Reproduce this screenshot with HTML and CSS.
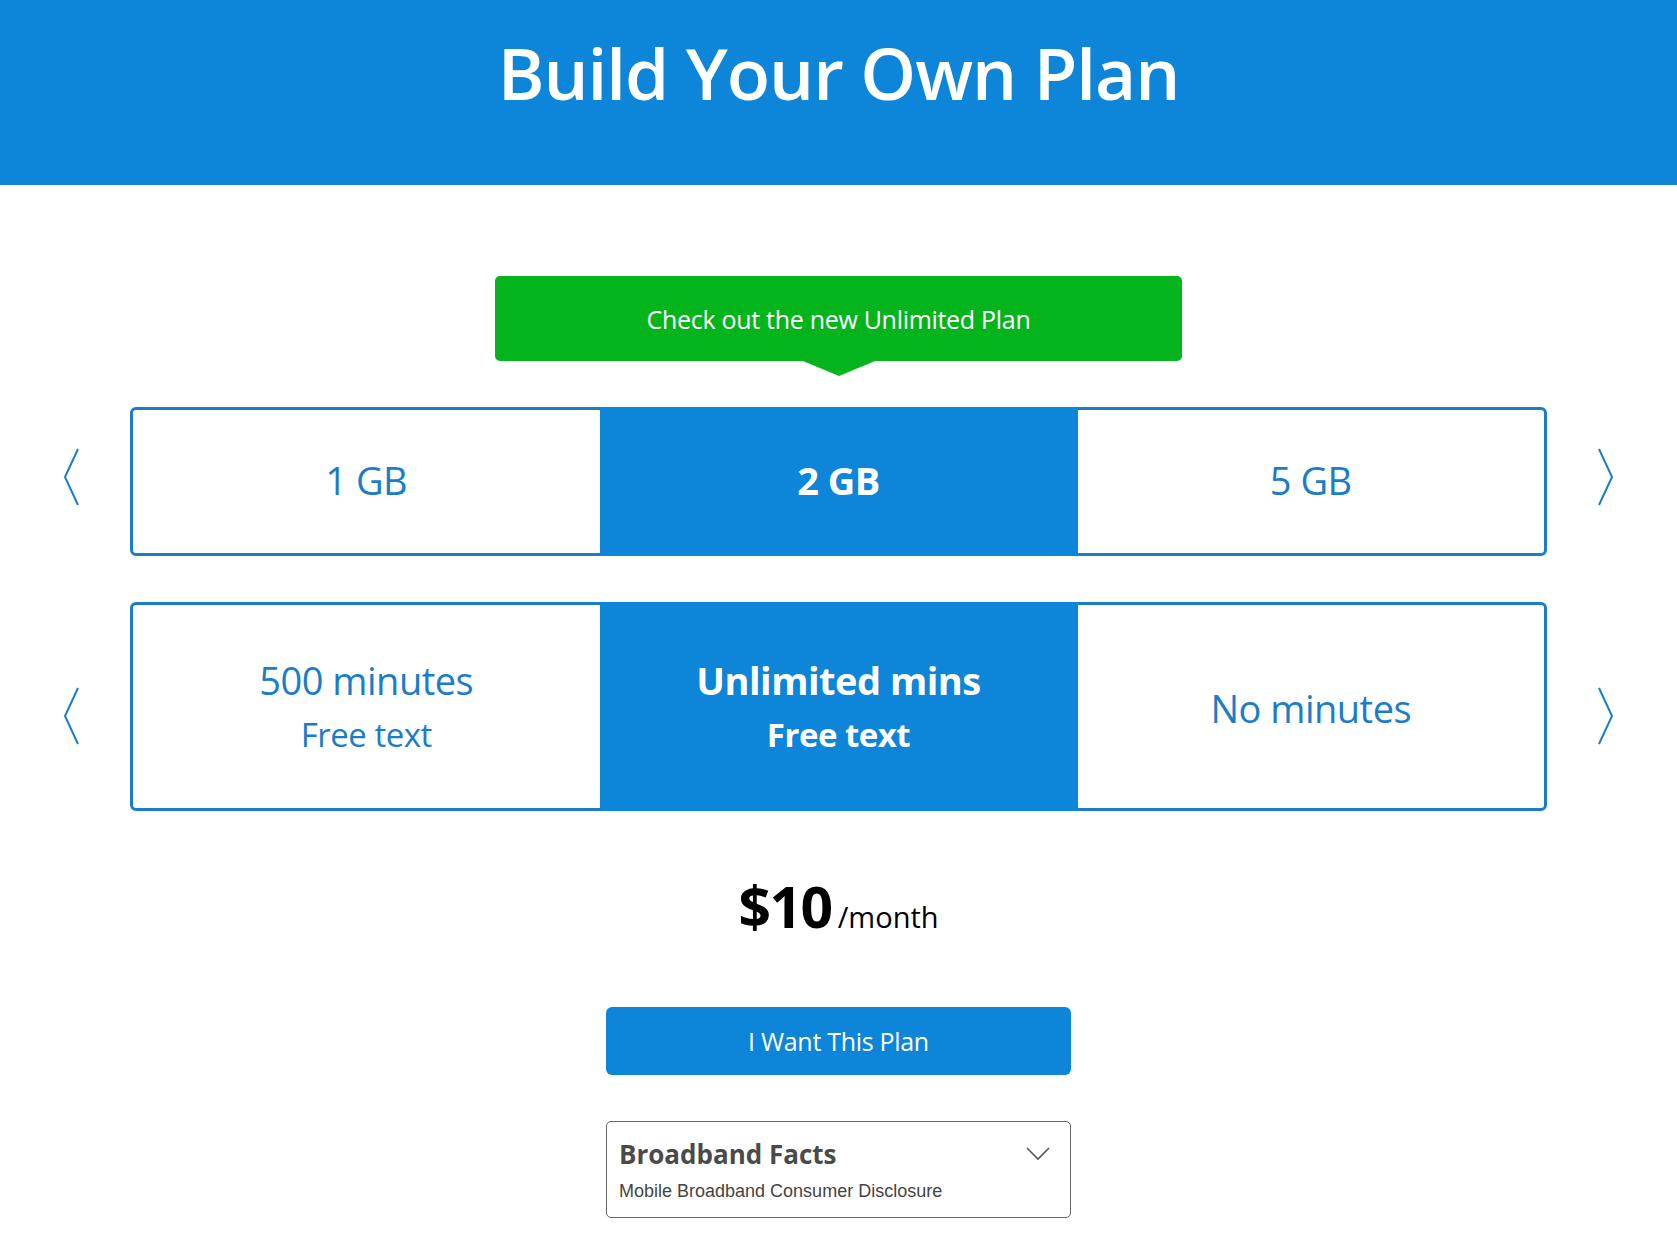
FILE: index.html
```html
<!DOCTYPE html>
<html lang="en">
<head>
<meta charset="utf-8">
<title>Build Your Own Plan</title>
<link rel="stylesheet" href="styles.css">
</head>
<body>
<header class="hero">
  <h1 class="hero-title">Build Your Own Plan</h1>
</header>
<main class="builder">
  <div class="promo">
    <span class="promo-text">Check out the new Unlimited Plan</span>
  </div>

  <div class="selector selector-data">
    <button class="nav nav-prev" aria-label="Previous">
      <svg viewBox="0 0 18 60" width="18" height="60"><polyline points="16,2 3,30 16,58" fill="none" stroke="#1b7dc8" stroke-width="2"/></svg>
    </button>
    <div class="options">
      <div class="option">1 GB</div>
      <div class="option option-active">2 GB</div>
      <div class="option">5 GB</div>
    </div>
    <button class="nav nav-next" aria-label="Next">
      <svg viewBox="0 0 18 60" width="18" height="60"><polyline points="2,2 15,30 2,58" fill="none" stroke="#1b7dc8" stroke-width="2"/></svg>
    </button>
  </div>

  <div class="selector selector-minutes">
    <button class="nav nav-prev" aria-label="Previous">
      <svg viewBox="0 0 18 60" width="18" height="60"><polyline points="16,2 3,30 16,58" fill="none" stroke="#1b7dc8" stroke-width="2"/></svg>
    </button>
    <div class="options options-tall">
      <div class="option"><span class="opt-main">500 minutes</span><span class="opt-sub">Free text</span></div>
      <div class="option option-active"><span class="opt-main">Unlimited mins</span><span class="opt-sub">Free text</span></div>
      <div class="option"><span class="opt-main">No minutes</span></div>
    </div>
    <button class="nav nav-next" aria-label="Next">
      <svg viewBox="0 0 18 60" width="18" height="60"><polyline points="2,2 15,30 2,58" fill="none" stroke="#1b7dc8" stroke-width="2"/></svg>
    </button>
  </div>

  <div class="price">
    <span class="price-amount">$10</span><span class="price-period">/month</span>
  </div>

  <button class="cta">I Want This Plan</button>

  <div class="facts">
    <div class="facts-text">
      <div class="facts-title">Broadband Facts</div>
      <div class="facts-sub">Mobile Broadband Consumer Disclosure</div>
    </div>
    <svg class="facts-chevron" viewBox="0 0 24 14" width="24" height="14"><polyline points="1,1 12,12 23,1" fill="none" stroke="#555" stroke-width="1.6"/></svg>
  </div>
</main>
</body>
</html>
```
FILE: styles.css
```css
* { box-sizing: border-box; }

body {
  margin: 0;
  font-family: "Open Sans", "Noto Sans", sans-serif;
  background: #ffffff;
  color: #111;
}

.hero {
  background: #0d85d8;
  height: 185px;
  display: flex;
  justify-content: center;
  padding-top: 25px;
}

.hero-title {
  margin: 0;
  color: #fff;
  font-family: "Open Sans", sans-serif;
  font-weight: 600;
  font-size: 71px;
  letter-spacing: -1px;
  line-height: 96px;
}

.builder {
  display: flex;
  flex-direction: column;
  align-items: center;
}

.promo {
  position: relative;
  margin-top: 91px;
  width: 687px;
  height: 85px;
  background: #04b41d;
  border-radius: 5px;
  display: flex;
  align-items: center;
  justify-content: center;
}

.promo::after {
  content: "";
  position: absolute;
  left: 50%;
  bottom: -15px;
  margin-left: -36px;
  border-left: 36px solid transparent;
  border-right: 36px solid transparent;
  border-top: 15px solid #04b41d;
}

.promo-text {
  color: #fff;
  font-size: 25px;
  letter-spacing: -0.3px;
}

.selector {
  display: flex;
  align-items: center;
  gap: 50px;
  margin-top: 46px;
}

.nav {
  background: none;
  border: 0;
  padding: 0;
  width: 18px;
  height: 60px;
  display: flex;
  cursor: pointer;
}

.selector-data .nav { margin-bottom: 10px; }
.selector-minutes .nav { margin-top: 18px; }

.options {
  width: 1417px;
  height: 149px;
  border: 3px solid #1b7dc8;
  border-radius: 6px;
  display: grid;
  grid-template-columns: 1fr 478px 1fr;
}

.options-tall { height: 209px; }

.option {
  display: flex;
  flex-direction: column;
  align-items: center;
  justify-content: center;
  color: #1b7dc8;
  font-size: 38px;
  letter-spacing: -0.5px;
  padding-bottom: 4px;
}

.options-tall .option {
  padding-bottom: 0;
  padding-top: 3px;
}

.option-active {
  background: #0d85d8;
  color: #fff;
  font-weight: 700;
  margin: -3px 0;
}

.opt-main { line-height: 53px; }
.opt-sub { font-size: 33px; line-height: 55px; }

.price {
  margin-top: 56px;
  display: flex;
  align-items: baseline;
  gap: 6px;
}

.price-amount {
  font-size: 57px;
  font-weight: 700;
  color: #000;
  letter-spacing: -1.5px;
}

.price-period {
  font-size: 29px;
  color: #000;
}

.cta {
  margin-top: 62px;
  width: 465px;
  height: 68px;
  background: #0d85d8;
  color: #fff;
  border: 0;
  border-radius: 6px;
  font-family: "Open Sans", sans-serif;
  font-size: 25px;
  letter-spacing: -0.3px;
}

.facts {
  margin-top: 46px;
  width: 465px;
  height: 97px;
  border: 1px solid #666;
  border-radius: 5px;
  display: flex;
  justify-content: space-between;
  align-items: flex-start;
  padding: 14px 20px 0 12px;
}

.facts-title {
  font-size: 26px;
  font-weight: 700;
  color: #4a4a4a;
  line-height: 36px;
}

.facts-sub {
  font-family: "Liberation Sans", Arial, sans-serif;
  font-size: 18px;
  color: #444;
  margin-top: 9px;
}

.facts-chevron { margin-top: 11px; }
```
